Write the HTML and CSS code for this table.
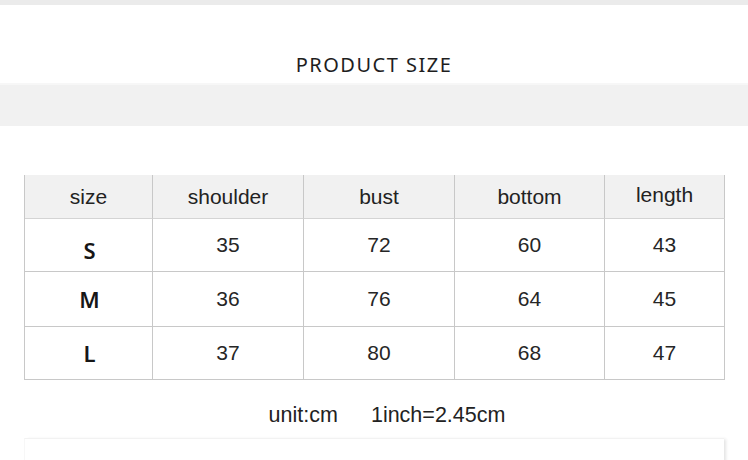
FILE: index.html
```html
<!DOCTYPE html>
<html>
<head>
<meta charset="utf-8">
<link rel="stylesheet" href="styles.css">
</head>
<body>
<div class="page">
  <div class="top-strip"></div>
  <div class="title-section">
    <h1 class="title">PRODUCT SIZE</h1>
  </div>
  <div class="band"></div>
  <div class="size-table">
    <div class="cell head">size</div>
    <div class="cell head">shoulder</div>
    <div class="cell head">bust</div>
    <div class="cell head">bottom</div>
    <div class="cell head head-up">length</div>

    <div class="row-a cell size s-down">S</div>
    <div class="row-a cell num">35</div>
    <div class="row-a cell num">72</div>
    <div class="row-a cell num">60</div>
    <div class="row-a cell num">43</div>

    <div class="row-b cell size">M</div>
    <div class="row-b cell num">36</div>
    <div class="row-b cell num">76</div>
    <div class="row-b cell num">64</div>
    <div class="row-b cell num">45</div>

    <div class="row-c cell size">L</div>
    <div class="row-c cell num">37</div>
    <div class="row-c cell num">80</div>
    <div class="row-c cell num">68</div>
    <div class="row-c cell num">47</div>
  </div>
  <div class="unit-line">
    <span>unit:cm</span>
    <span>1inch=2.45cm</span>
  </div>
  <div class="bottom-box"></div>
</div>
</body>
</html>
```

FILE: styles.css
```css
* { box-sizing: border-box; }
html, body { margin: 0; padding: 0; background: #ffffff; }
body { width: 748px; height: 460px; overflow: hidden; }

.page {
  display: flex;
  flex-direction: column;
}

.top-strip {
  height: 5px;
  background: #ebebeb;
}

.title-section {
  height: 78px;
  padding-top: 50px;
  display: flex;
  justify-content: center;
}

.title {
  margin: 0;
  font-family: "Noto Sans", sans-serif;
  font-weight: 400;
  font-size: 20px;
  line-height: 20px;
  letter-spacing: 1.5px;
  color: #1e1e1e;
}

.band {
  height: 43px;
  background: #f1f1f1;
  border-top: 2px solid #f7f7f7;
}

.size-table {
  margin: 49px 0 0 24px;
  width: 701px;
  display: grid;
  grid-template-columns: 128px 151px 151px 150px 120px;
  grid-template-rows: 44px 53px 55px 53px;
  border-left: 1px solid #c8c8c8;
}

.cell {
  display: flex;
  align-items: center;
  justify-content: center;
  border-right: 1px solid #c8c8c8;
  border-bottom: 1px solid #c8c8c8;
  font-family: "Liberation Sans", Arial, sans-serif;
  font-size: 21px;
  line-height: 24px;
  color: #222222;
}

.head {
  background: #f1f1f1;
  border-bottom-color: #d4d4d4;
  padding-top: 1px;
}

.head-up { padding-top: 0; padding-bottom: 3px; }

.num { color: #262626; }

.size {
  font-family: "Noto Sans", sans-serif;
  font-weight: 600;
  font-size: 22px;
  color: #161616;
  padding-left: 2px;
}

.s-down { padding-top: 9px; }

.unit-line {
  margin-top: 23px;
  padding-left: 26px;
  display: flex;
  justify-content: center;
  gap: 33px;
  font-family: "Liberation Sans", Arial, sans-serif;
  font-size: 21.5px;
  line-height: 24px;
  color: #222222;
}

.bottom-box {
  margin: 11px 0 0 24px;
  width: 700px;
  height: 40px;
  border-top: 1px solid #f2f2f2;
  border-left: 1px solid #f7f7f7;
  box-shadow: 3px 0 3px -1px #e4e4e4;
}
```
